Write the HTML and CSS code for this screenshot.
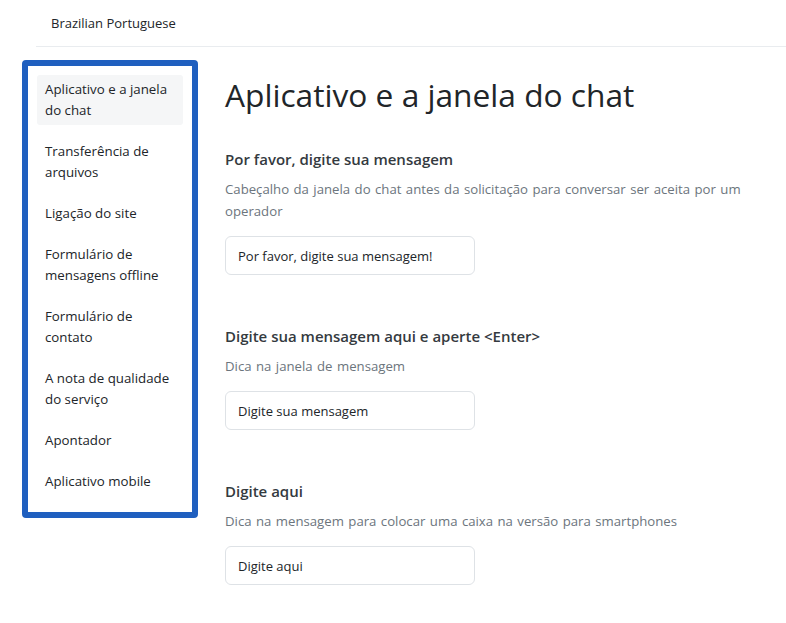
FILE: index.html
```html
<!DOCTYPE html>
<html lang="pt-BR">
<head>
<meta charset="utf-8">
<title>Aplicativo e a janela do chat</title>
<link rel="stylesheet" href="styles.css">
</head>
<body>
<header class="topbar">
  <span class="lang">Brazilian Portuguese</span>
</header>
<div class="layout">
  <nav class="sidebar">
    <ul class="menu">
      <li class="menu-item active">Aplicativo e a janela do chat</li>
      <li class="menu-item">Transferência de arquivos</li>
      <li class="menu-item">Ligação do site</li>
      <li class="menu-item">Formulário de mensagens offline</li>
      <li class="menu-item">Formulário de contato</li>
      <li class="menu-item">A nota de qualidade do serviço</li>
      <li class="menu-item">Apontador</li>
      <li class="menu-item">Aplicativo mobile</li>
    </ul>
  </nav>
  <main class="content">
    <h1 class="page-title">Aplicativo e a janela do chat</h1>
    <section class="field">
      <h2 class="field-title">Por favor, digite sua mensagem</h2>
      <p class="field-desc">Cabeçalho da janela do chat antes da solicitação para conversar ser aceita por um operador</p>
      <input class="field-input" type="text" value="Por favor, digite sua mensagem!">
    </section>
    <section class="field">
      <h2 class="field-title">Digite sua mensagem aqui e aperte &lt;Enter&gt;</h2>
      <p class="field-desc">Dica na janela de mensagem</p>
      <input class="field-input" type="text" value="Digite sua mensagem">
    </section>
    <section class="field">
      <h2 class="field-title">Digite aqui</h2>
      <p class="field-desc">Dica na mensagem para colocar uma caixa na versão para smartphones</p>
      <input class="field-input" type="text" value="Digite aqui">
    </section>
  </main>
</div>
</body>
</html>
```

FILE: styles.css
```css
* { box-sizing: border-box; }

html, body {
  margin: 0;
  padding: 0;
  background: #ffffff;
}

body {
  font-family: "Open Sans", "Noto Sans", sans-serif;
  color: #212529;
  font-size: 13px;
}

.topbar {
  margin-left: 36px;
  height: 47px;
  padding: 0 15px;
  border-bottom: 1px solid #e9ecef;
  display: flex;
  align-items: center;
}

.lang {
  font-size: 13px;
  color: #212529;
}

.layout {
  display: flex;
  align-items: flex-start;
}

.sidebar {
  margin: 13px 0 0 22px;
  width: 176px;
  flex: none;
  border: 6px solid #1f5fbf;
  border-radius: 4px;
}

.menu {
  list-style: none;
  margin: 0;
  padding: 9px 9px 4px;
}

.menu-item {
  padding: 4px 8px;
  margin-bottom: 12px;
  line-height: 21px;
  font-size: 13.3px;
  color: #212529;
  border-radius: 3px;
}

.menu-item.active {
  background: #f5f6f7;
}

.content {
  flex: 1;
  padding: 0 16px 0 27px;
}

.page-title {
  margin: 28px 0 0;
  font-size: 31.7px;
  font-weight: 500;
  line-height: 40px;
  color: #212529;
}

.field {
  margin-top: 33px;
}

.field + .field {
  margin-top: 50px;
}

.field-title {
  margin: 0;
  font-size: 15px;
  font-weight: 600;
  line-height: 22px;
  color: #343a40;
}

.field-desc {
  margin: 8px 0 0;
  font-size: 13.2px;
  line-height: 22px;
  word-spacing: 1px;
  color: #6c757d;
}

.field-input {
  display: block;
  margin-top: 14px;
  width: 250px;
  height: 39px;
  padding: 0 12px;
  border: 1px solid #dee2e6;
  border-radius: 6px;
  font-family: inherit;
  font-size: 13px;
  color: #212529;
  background: #ffffff;
}
```
